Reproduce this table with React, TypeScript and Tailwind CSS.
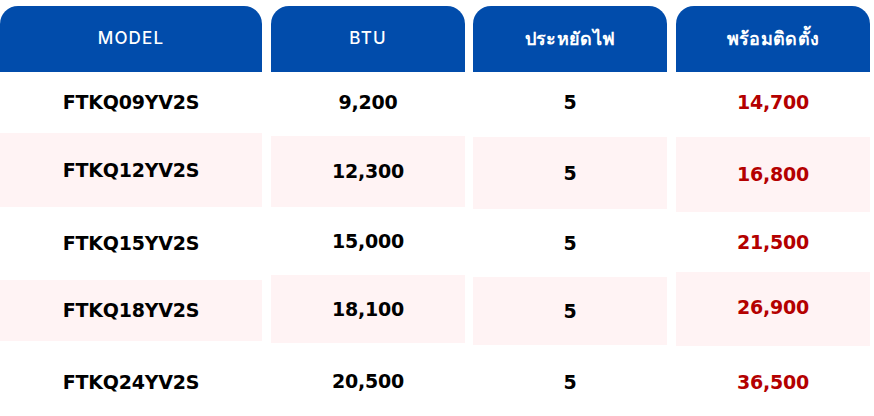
type Cell = { text: string; h: number; pink: boolean; pb?: number };

type Col = { title: string; width: string; ml: string; thai?: boolean; red?: boolean; cells: Cell[] };

const PB: Record<number, string> = { 0: 'pb-0', 4: 'pb-[4px]', 5: 'pb-[5px]' };
const H: Record<number, string> = {
  60: 'h-[60px]',
  61: 'h-[61px]',
  64: 'h-[64px]',
  65: 'h-[65px]',
  68: 'h-[68px]',
  71: 'h-[71px]',
  72: 'h-[72px]',
  73: 'h-[73px]',
  74: 'h-[74px]',
  75: 'h-[75px]',
  76: 'h-[76px]',
  82: 'h-[82px]',
};

const COLS: Col[] = [
  {
    title: 'MODEL',
    width: 'w-[262px]',
    ml: 'ml-0',
    cells: [
      { text: 'FTKQ09YV2S', h: 61, pink: false },
      { text: 'FTKQ12YV2S', h: 74, pink: true },
      { text: 'FTKQ15YV2S', h: 73, pink: false },
      { text: 'FTKQ18YV2S', h: 61, pink: true },
      { text: 'FTKQ24YV2S', h: 82, pink: false },
    ],
  },
  {
    title: 'BTU',
    width: 'w-[194px]',
    ml: 'ml-[9px]',
    cells: [
      { text: '9,200', h: 64, pink: false, pb: 4 },
      { text: '12,300', h: 71, pink: true },
      { text: '15,000', h: 68, pink: false },
      { text: '18,100', h: 68, pink: true },
      { text: '20,500', h: 76, pink: false },
    ],
  },
  {
    title: 'ประหยัดไฟ',
    width: 'w-[194px]',
    ml: 'ml-[8px]',
    thai: true,
    cells: [
      { text: '5', h: 65, pink: false, pb: 5 },
      { text: '5', h: 72, pink: true },
      { text: '5', h: 68, pink: false },
      { text: '5', h: 68, pink: true },
      { text: '5', h: 74, pink: false },
    ],
  },
  {
    title: 'พร้อมติดตั้ง',
    width: 'w-[194px]',
    ml: 'ml-[9px]',
    thai: true,
    red: true,
    cells: [
      { text: '14,700', h: 65, pink: false, pb: 5 },
      { text: '16,800', h: 75, pink: true },
      { text: '21,500', h: 60, pink: false },
      { text: '26,900', h: 74, pink: true, pb: 4 },
      { text: '36,500', h: 72, pink: false },
    ],
  },
];

export default function App() {
  return (
    <div className="flex h-[416px] w-[874px] overflow-hidden bg-white pt-[6px] font-['DejaVu_Sans','Noto_Sans',sans-serif]">
      {COLS.map((col) => (
        <div key={col.title} className={`flex shrink-0 flex-col ${col.width} ${col.ml}`}>
          <div
            className={`flex h-[66px] shrink-0 items-center justify-center rounded-t-[18px] bg-[#014cab] pb-[1px] font-['Inter','Noto_Sans',sans-serif] text-white ${
              col.thai ? 'text-[18px] font-bold tracking-[0.02em]' : 'text-[17px] font-medium tracking-[0.07em]'
            }`}
          >
            {col.title}
          </div>
          {col.cells.map((c, i) => (
            <div
              key={i}
              className={`flex shrink-0 items-center justify-center text-[19px] font-bold tracking-[-0.01em] ${H[c.h]} ${PB[c.pb ?? 0]} ${
                c.pink ? 'bg-[#fff3f4]' : 'bg-white'
              } ${col.red ? 'text-[#b40000]' : 'text-black'}`}
            >
              {c.text}
            </div>
          ))}
        </div>
      ))}
    </div>
  );
}
